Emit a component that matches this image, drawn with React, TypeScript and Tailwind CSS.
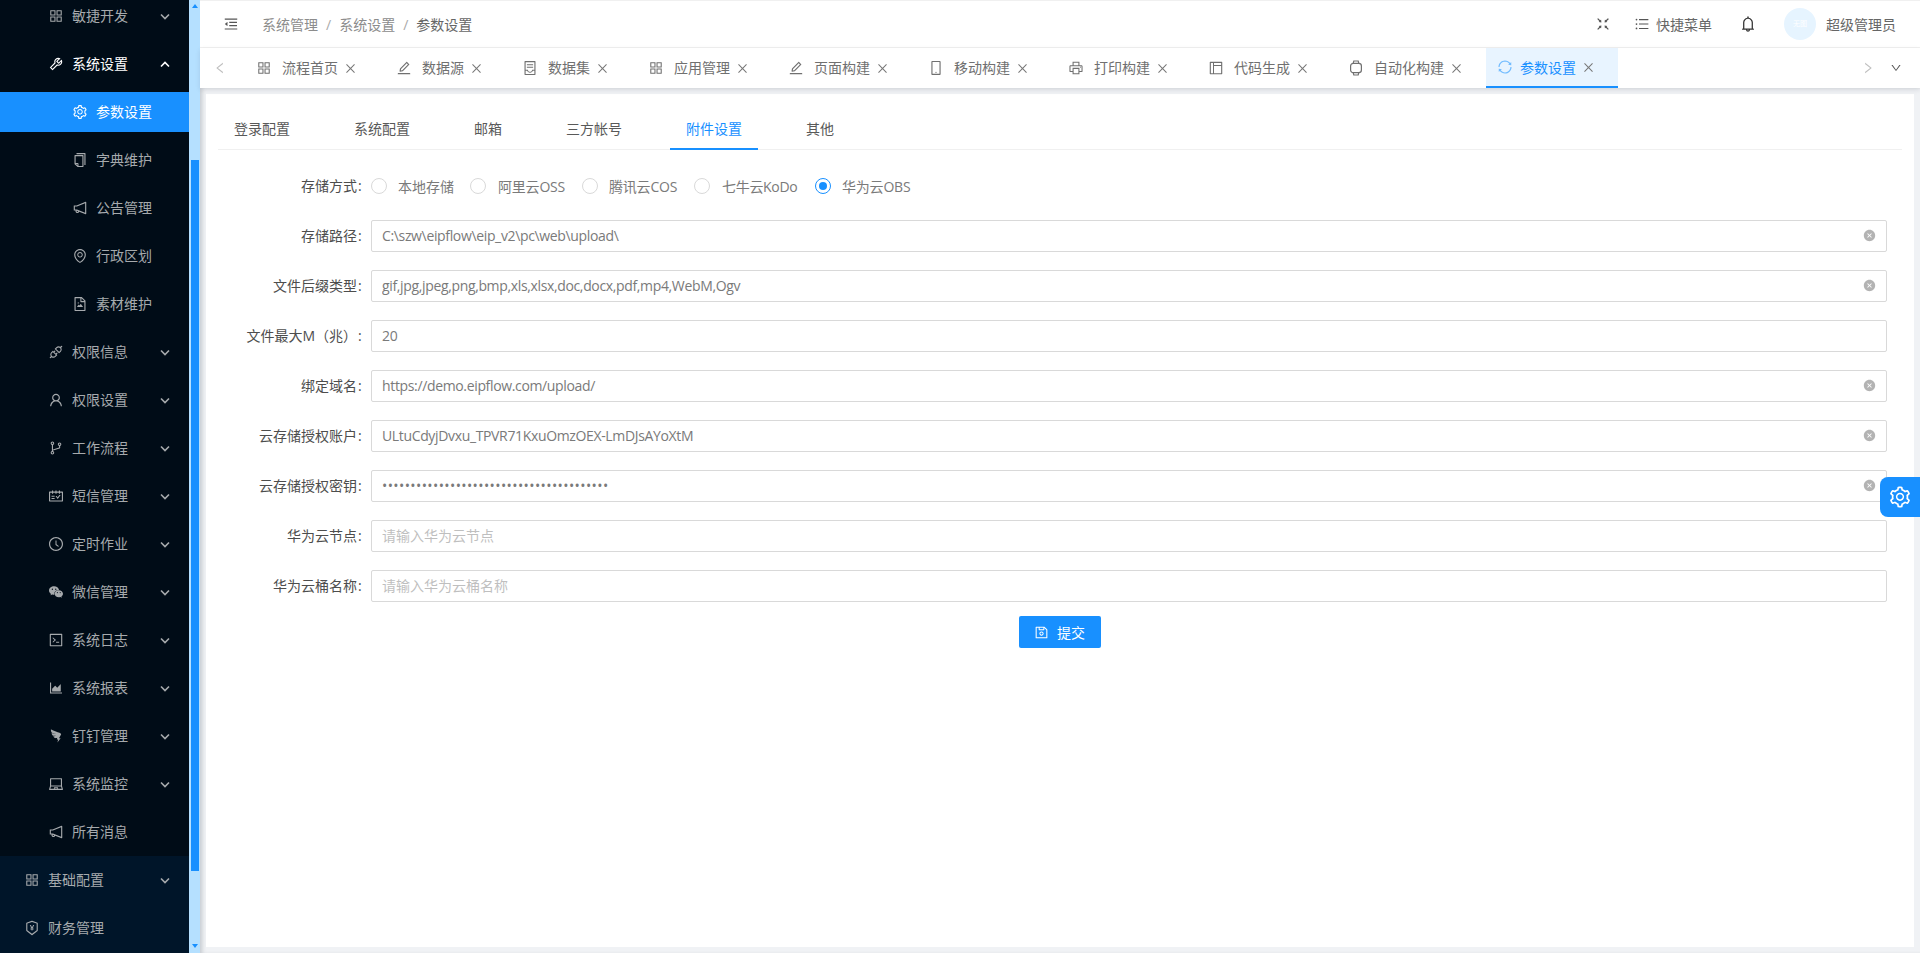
import React from "react";
import {
  AiOutlineAppstore, AiOutlineTool, AiOutlineSetting, AiOutlineCopy, AiOutlineNotification,
  AiOutlineEnvironment, AiOutlineFileImage, AiOutlineApi, AiOutlineUser, AiOutlineBranches,
  AiOutlineSchedule, AiOutlineClockCircle, AiFillWechat, AiOutlineCode, AiOutlineAreaChart,
  AiOutlineDingding, AiOutlineLaptop, AiOutlinePropertySafety, AiOutlineEdit, AiOutlineContainer,
  AiOutlineMobile, AiOutlinePrinter, AiOutlineLayout, AiOutlineSync, AiOutlineClose,
  AiOutlineMenuFold, AiOutlineFullscreenExit, AiOutlineUnorderedList, AiOutlineBell,
  AiFillCloseCircle, AiOutlineSave, AiOutlineLeft, AiOutlineRight, AiOutlineDown,
} from "react-icons/ai";

function Chevron({ up }: { up?: boolean }) {
  return (
    <svg width="10" height="7" viewBox="0 0 10 7" className="ml-auto mr-[19px]">
      <path d={up ? "M1 5.5 L5 1.5 L9 5.5" : "M1 1.5 L5 5.5 L9 1.5"} fill="none" stroke="currentColor" strokeWidth="1.6" />
    </svg>
  );
}

function WatchIcon({ size, className }: { size?: number; className?: string }) {
  return (
    <svg width={size} height={size} viewBox="0 0 16 16" className={className} fill="none" stroke="currentColor" strokeWidth="1.2">
      <path d="M5.2 3.4 L5.8 1 H10.2 L10.8 3.4" />
      <path d="M5.2 12.6 L5.8 15 H10.2 L10.8 12.6" />
      <rect x="2.6" y="3.4" width="10.8" height="9.2" rx="2.6" />
    </svg>
  );
}

type Item = { icon: any; label: string; chevron?: boolean };

const subItems: Item[] = [
  { icon: AiOutlineCopy, label: "字典维护" },
  { icon: AiOutlineNotification, label: "公告管理" },
  { icon: AiOutlineEnvironment, label: "行政区划" },
  { icon: AiOutlineFileImage, label: "素材维护" },
];
const groupItems: Item[] = [
  { icon: AiOutlineApi, label: "权限信息", chevron: true },
  { icon: AiOutlineUser, label: "权限设置", chevron: true },
  { icon: AiOutlineBranches, label: "工作流程", chevron: true },
  { icon: AiOutlineSchedule, label: "短信管理", chevron: true },
  { icon: AiOutlineClockCircle, label: "定时作业", chevron: true },
  { icon: AiFillWechat, label: "微信管理", chevron: true },
  { icon: AiOutlineCode, label: "系统日志", chevron: true },
  { icon: AiOutlineAreaChart, label: "系统报表", chevron: true },
  { icon: AiOutlineDingding, label: "钉钉管理", chevron: true },
  { icon: AiOutlineLaptop, label: "系统监控", chevron: true },
  { icon: AiOutlineNotification, label: "所有消息" },
];

function Row({ item, className }: { item: Item; className: string }) {
  const I = item.icon;
  return (
    <div className={"flex items-center h-12 text-[14px] " + className}>
      <I size={16} className="-ml-px mr-[8px] shrink-0" />
      <span className="pb-[2px]">{item.label}</span>
      {item.chevron && <Chevron />}
    </div>
  );
}

const topTabs = [
  { icon: AiOutlineAppstore, label: "流程首页", w: "w-[140px]" },
  { icon: AiOutlineEdit, label: "数据源", w: "w-[126px]" },
  { icon: AiOutlineContainer, label: "数据集", w: "w-[126px]" },
  { icon: AiOutlineAppstore, label: "应用管理", w: "w-[140px]" },
  { icon: AiOutlineEdit, label: "页面构建", w: "w-[140px]" },
  { icon: AiOutlineMobile, label: "移动构建", w: "w-[140px]" },
  { icon: AiOutlinePrinter, label: "打印构建", w: "w-[140px]" },
  { icon: AiOutlineLayout, label: "代码生成", w: "w-[140px]" },
  { icon: WatchIcon, label: "自动化构建", w: "w-[149px]" },
];

const formTabs = ["登录配置", "系统配置", "邮箱", "三方帐号", "附件设置", "其他"];
const radios = [
  { t: "本地存储", w: "w-[99px]", c: "" },
  { t: "阿里云OSS", w: "w-[112px]", c: "tracking-[-0.2px] ml-px" },
  { t: "腾讯云COS", w: "w-[112px]", c: "tracking-[-0.2px]" },
  { t: "七牛云KoDo", w: "w-[121px]", c: "tracking-[-0.3px] ml-px" },
  { t: "华为云OBS", w: "w-[112px]", c: "tracking-[-0.2px]" },
];

const fields = [
  { label: "存储路径", value: "C:\\szw\\eipflow\\eip_v2\\pc\\web\\upload\\", clear: true },
  { label: "文件后缀类型", value: "gif,jpg,jpeg,png,bmp,xls,xlsx,doc,docx,pdf,mp4,WebM,Ogv", clear: true },
  { label: "文件最大M（兆）", value: "20" },
  { label: "绑定域名", value: "https://demo.eipflow.com/upload/", clear: true },
  { label: "云存储授权账户", value: "ULtuCdyjDvxu_TPVR71KxuOmzOEX-LmDJsAYoXtM", clear: true },
  { label: "云存储授权密钥", value: "••••••••••••••••••••••••••••••••••••••••", clear: true, dots: true },
  { label: "华为云节点", placeholder: "请输入华为云节点" },
  { label: "华为云桶名称", placeholder: "请输入华为云桶名称" },
];

function Label({ text }: { text: string }) {
  return (
    <div className="w-[153px] shrink-0 flex justify-end pr-[7px] text-[14px] text-[#4d4d4d] leading-8 whitespace-nowrap">
      <span>{text}</span>
      <span className="ml-px w-[6px]">:</span>
    </div>
  );
}

export default function App() {
  return (
    <div className="flex h-[953px] w-[1920px] overflow-hidden bg-[#f0f2f5] font-['Open_Sans','Noto_Sans_CJK_SC',sans-serif]">
      {/* Sidebar */}
      <aside className="w-[189px] shrink-0 flex flex-col bg-[#000c17] text-[#a6aaad]">
        <div className="-mt-2 flex flex-col">
          <Row item={{ icon: AiOutlineAppstore, label: "敏捷开发", chevron: true }} className="pl-[49px]" />
          <div className="flex items-center h-12 pl-[49px] text-[14px] text-white">
            <AiOutlineTool size={16} className="-ml-px mr-[8px]" />
            <span className="pb-[2px]">系统设置</span>
            <Chevron up />
          </div>
          <div className="flex items-center h-10 my-1 pl-[73px] text-[14px] text-white bg-[#1890ff]">
            <AiOutlineSetting size={16} className="-ml-px mr-[8px]" />
            <span className="pb-[2px]">参数设置</span>
          </div>
          {subItems.map((it) => (
            <Row key={it.label} item={it} className="pl-[73px]" />
          ))}
          {groupItems.map((it) => (
            <Row key={it.label} item={it} className="pl-[49px]" />
          ))}
        </div>
        <div className="flex-1 bg-[#001529] flex flex-col">
          <Row item={{ icon: AiOutlineAppstore, label: "基础配置", chevron: true }} className="pl-[25px]" />
          <Row item={{ icon: AiOutlinePropertySafety, label: "财务管理" }} className="pl-[25px]" />
        </div>
      </aside>

      {/* Scrollbar */}
      <div className="w-[11px] shrink-0 bg-[#b5e0ff] flex flex-col items-center">
        <svg width="6" height="4" viewBox="0 0 6 4" className="mt-[4px] shrink-0">
          <path d="M0 4 L3 0 L6 4 Z" fill="#1890ff" />
        </svg>
        <div className="mt-[152px] h-[711px] w-[8px] shrink-0 bg-[#1890ff]" />
        <svg width="6" height="4" viewBox="0 0 6 4" className="mt-[73px] shrink-0">
          <path d="M0 0 L3 4 L6 0 Z" fill="#1890ff" />
        </svg>
      </div>

      {/* Main */}
      <div className="relative flex-1 min-w-0 flex flex-col">
        <header className="h-12 shrink-0 flex items-center bg-white border-t border-t-[#f0f0f0] border-b border-b-[#f0f0f0] text-[14px]">
          <AiOutlineMenuFold size={16} className="ml-[23px] text-[#555]" />
          <div className="ml-[23px] flex items-center text-[#8c8c8c]">
            <span>系统管理</span>
            <span className="mx-[8px] text-[#aaa]">/</span>
            <span>系统设置</span>
            <span className="mx-[8px] text-[#aaa]">/</span>
            <span className="text-[#666]">参数设置</span>
          </div>
          <div className="ml-auto flex items-center text-[#666]">
            <AiOutlineFullscreenExit size={16} className="text-[#555]" />
            <AiOutlineUnorderedList size={16} className="ml-[23px] text-[#555]" />
            <span className="ml-[6px]">快捷菜单</span>
            <AiOutlineBell size={18} className="ml-[27px] text-[#333]" />
            <div className="ml-[27px] w-8 h-8 rounded-full bg-[#e6f4ff] flex items-center justify-center text-white text-[7px]">无图</div>
            <span className="ml-[10px] mr-[24px]">超级管理员</span>
          </div>
        </header>

        <div className="h-10 shrink-0 flex items-stretch bg-white shadow-[0_2px_5px_rgba(0,21,41,0.1)] z-10 text-[14px]">
          <div className="w-[45px] shrink-0 flex items-center pl-[13px] text-[#bfbfbf]">
            <AiOutlineLeft size={14} />
          </div>
          {topTabs.map((t) => {
            const I = t.icon;
            return (
              <div key={t.label} className={"flex items-center pl-3 shrink-0 text-[#707070] " + t.w}>
                <I size={16} className="-ml-px mr-[10px] shrink-0" />
                <span className="pb-[2px]">{t.label}</span>
                <AiOutlineClose size={13} className="ml-[6px] text-[#777]" />
              </div>
            );
          })}
          <div className="flex items-center w-[132px] pl-3 shrink-0 text-[#1890ff] bg-[#e8f4ff] border-b-2 border-b-[#1890ff]">
            <AiOutlineSync size={16} className="-ml-px mr-[7px] text-[#72bcff]" />
            <span>参数设置</span>
            <AiOutlineClose size={13} className="ml-[6px] text-[#777]" />
          </div>
          <div className="ml-auto flex items-center pr-[18px] text-[#bfbfbf]">
            <AiOutlineRight size={14} />
            <AiOutlineDown size={12} className="ml-[15px] text-[#555]" />
          </div>
        </div>

        <div className="flex-1 min-h-0 p-[6px] shadow-[inset_4px_0_4px_-2px_rgba(0,21,41,0.18)]">
          <div className="h-full bg-white px-3 pt-[14px]">
            <div className="flex border-b border-b-[#f0f0f0] text-[14px] text-[#595959]">
              {formTabs.map((t) => (
                <div
                  key={t}
                  className={
                    "h-[42px] -mb-px px-4 mr-8 flex items-center border-b-2 " +
                    (t === "附件设置" ? "border-b-[#1890ff] text-[#1890ff]" : "border-b-transparent")
                  }
                >
                  {t}
                </div>
              ))}
            </div>

            <div className="pt-5 pr-[15px]">
              <div className="flex h-8 mb-[18px] items-center">
                <Label text="存储方式" />
                <div className="flex items-center text-[14px] text-[#7a7a7a]">
                  {radios.map((r) => {
                    const on = r.t === "华为云OBS";
                    return (
                      <div key={r.t} className={"flex items-center " + r.w}>
                        <span
                          className={
                            "w-4 h-4 shrink-0 rounded-full border flex items-center justify-center mr-[11px] " +
                            (on ? "border-[#1890ff]" : "border-[#d9d9d9]")
                          }
                        >
                          {on && <span className="w-2 h-2 rounded-full bg-[#1890ff]" />}
                        </span>
                        <span className={"whitespace-nowrap " + r.c}>{r.t}</span>
                      </div>
                    );
                  })}
                </div>
              </div>

              {fields.map((f) => (
                <div key={f.label} className="flex h-8 mb-[18px]">
                  <Label text={f.label} />
                  <div className="relative flex-1 min-w-0">
                    <input
                      readOnly
                      value={f.value ?? ""}
                      placeholder={f.placeholder}
                      className={
                        "w-full h-8 pl-[10px] pr-8 pb-px border border-[#d9d9d9] rounded-[2px] bg-white text-[#7a7a7a] outline-none placeholder:text-[#bfbfbf] " +
                        (f.dots ? "text-[14px] tracking-[0.4px]" : "text-[14px] tracking-[-0.35px] placeholder:tracking-normal")
                      }
                    />
                    {f.clear && (
                      <AiFillCloseCircle size={13} className="absolute right-[11px] top-[9px] text-[#b3b3b3]" />
                    )}
                  </div>
                </div>
              ))}

              <div className="flex justify-center pl-[14px]">
                <button className="w-[82px] h-8 -mt-1 flex items-center justify-center rounded-[2px] bg-[#1890ff] text-white text-[14px]">
                  <AiOutlineSave size={15} className="mr-[8px]" />
                  提交
                </button>
              </div>
            </div>
          </div>
        </div>

        {/* Floating settings */}
        <div className="absolute right-0 top-[477px] w-10 h-10 rounded-l-[8px] bg-[#1890ff] flex items-center justify-center text-white">
          <AiOutlineSetting size={24} />
        </div>
      </div>
    </div>
  );
}
